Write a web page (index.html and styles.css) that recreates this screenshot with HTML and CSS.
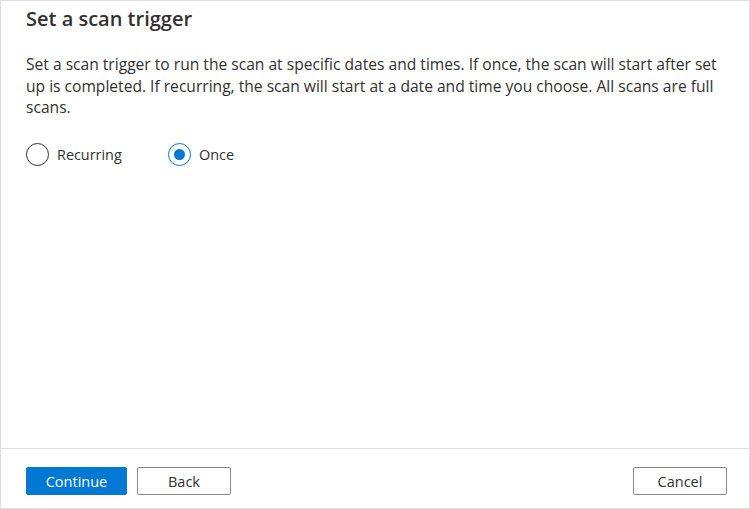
FILE: index.html
```html
<!DOCTYPE html>
<html>
<head>
<meta charset="utf-8">
<link rel="stylesheet" href="styles.css">
</head>
<body>
<div class="frame">
  <div class="content">
    <h1 class="title">Set a scan trigger</h1>
    <p class="desc">Set a scan trigger to run the scan at specific dates and times. If once, the scan will start after set up is completed. If recurring, the scan will start at a date and time you choose. All scans are full scans.</p>
    <div class="radios">
      <label class="radio"><span class="circle"></span><span class="rlabel">Recurring</span></label>
      <label class="radio checked"><span class="circle"></span><span class="rlabel">Once</span></label>
    </div>
  </div>
  <div class="footer">
    <div class="left">
      <button class="btn primary">Continue</button>
      <button class="btn">Back</button>
    </div>
    <button class="btn">Cancel</button>
  </div>
</div>
</body>
</html>
```
FILE: styles.css
```css
html, body { margin: 0; padding: 0; background: #fff; }
body { font-family: "Open Sans", "Noto Sans", sans-serif; color: #323130; }
.frame {
  box-sizing: border-box;
  width: 750px;
  height: 509px;
  border: 1px solid #e1dfdd;
  display: flex;
  flex-direction: column;
}
.content { flex: 1; padding: 0 24px 0 25px; }
.title {
  margin: 4px 0 0;
  font-size: 20px;
  font-weight: 600;
  line-height: 28px;
  color: #323130;
}
.desc {
  margin: 21px 0 0;
  font-size: 15.6px;
  line-height: 21.5px;
  color: #323130;
}
.radios { display: flex; gap: 0; margin-top: 24px; }
.radio { display: flex; align-items: center; width: 142px; font-size: 14.4px; }
.circle {
  box-sizing: border-box;
  width: 23px; height: 23px;
  border: 1px solid #323130;
  border-radius: 50%;
  margin-right: 8px;
  position: relative;
}
.checked .circle { border-color: #0078d4; }
.checked .circle::after {
  content: "";
  position: absolute;
  left: 5px; top: 5px;
  width: 11px; height: 11px;
  border-radius: 50%;
  background: #0078d4;
}
.footer {
  border-top: 1px solid #e1dfdd;
  display: flex;
  justify-content: space-between;
  align-items: flex-start;
  padding: 18px 22px 0 25px;
  height: 60px;
  box-sizing: border-box;
}
.left { display: flex; gap: 10px; }
.btn {
  font-family: inherit;
  font-size: 14.5px;
  height: 28px;
  width: 94px;
  background: #fff;
  border: 1px solid #8a8886;
  border-radius: 2px;
  color: #323130;
  padding: 0;
}
.btn.primary {
  width: 101px;
  background: #0078d4;
  border-color: #0078d4;
  color: #fff;
}
```
